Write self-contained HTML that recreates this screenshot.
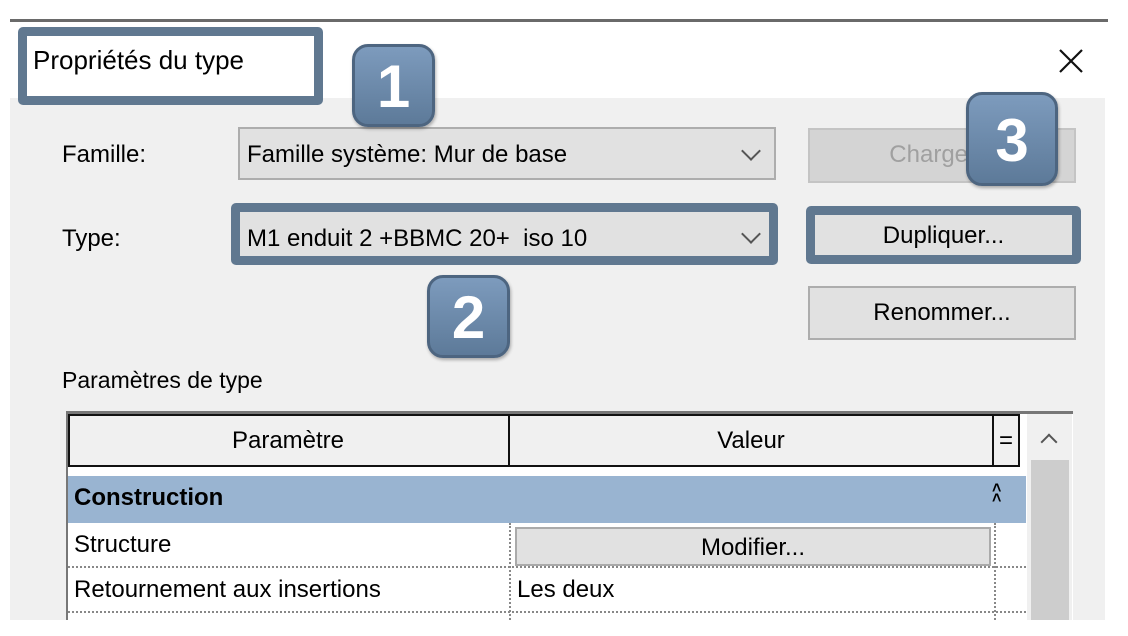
<!DOCTYPE html>
<html><head><meta charset="utf-8"><style>
body{margin:0;width:1128px;height:636px;background:#fff;position:relative;overflow:hidden;font-family:"Liberation Sans",sans-serif;color:#000}
.a{position:absolute;box-sizing:border-box}
.t{font-size:24px;white-space:nowrap}
.combo{background:#e1e1e1;border:2px solid #adadad}
.btn{background:#e1e1e1;border:2px solid #adadad;text-align:center;line-height:50px}
.hl{border:9px solid #607890;border-radius:5px}
.badge{background:linear-gradient(#7d9bbd,#5d7a99);border:3px solid #4d6580;border-radius:16px;color:#fff;font-weight:bold;font-size:60px;text-align:center;box-shadow:1px 2px 3px rgba(0,0,0,.3)}
.chev{position:absolute;width:12px;height:12px;border-right:2px solid #555;border-bottom:2px solid #555;transform:rotate(45deg)}
.dot{border-bottom:2px dotted #888}
</style></head><body>
<div class="a" style="left:10px;top:19px;width:1098px;height:3px;background:#6a6a6a"></div>
<div class="a" style="left:10px;top:98px;width:1095px;height:522px;background:#f0f0f0"></div>
<div class="a hl" style="left:18px;top:27px;width:305px;height:78px;background:#fff"></div>
<div class="a t" style="left:33px;top:45px;font-size:26px">Propriétés du type</div>
<svg class="a" style="left:1058px;top:48px" width="26" height="26"><path d="M2 2L24 24M24 2L2 24" stroke="#111" stroke-width="2.2"/></svg>

<div class="a t" style="left:62px;top:141px">Famille:</div>
<div class="a combo" style="left:238px;top:127px;width:538px;height:53px"></div>
<div class="a t" style="left:247px;top:141px">Famille système: Mur de base</div>
<div class="chev" style="left:744px;top:144px"></div>

<div class="a t" style="left:62px;top:225px">Type:</div>
<div class="a hl" style="left:231px;top:203px;width:547px;height:62px;background:#e1e1e1"></div>
<div class="a t" style="left:247px;top:225px">M1 enduit 2 +BBMC 20+&nbsp; iso 10</div>
<div class="chev" style="left:744px;top:227px"></div>

<div class="a btn t" style="left:808px;top:128px;width:268px;height:55px;color:#a0a0a0;background:#d4d4d4;border-color:#c4c4c4">Charger...</div>
<div class="a hl" style="left:806px;top:206px;width:275px;height:58px;background:#e1e1e1"></div>
<div class="a t" style="left:806px;top:222px;width:275px;text-align:center">Dupliquer...</div>
<div class="a btn t" style="left:808px;top:286px;width:268px;height:54px">Renommer...</div>

<div class="a t" style="left:62px;top:367px;font-size:23px">Paramètres de type</div>

<div class="a" style="left:0;top:0;width:1128px;height:620px;overflow:hidden">
<div class="a" style="left:66px;top:411px;width:1007px;height:220px;background:#fff;border-top:3px solid #777;border-left:2px solid #777"></div>
<div class="a" style="left:68px;top:414px;width:952px;height:53px;background:#f0f0f0;border:2px solid #111"></div>
<div class="a" style="left:508px;top:414px;width:2px;height:53px;background:#111"></div>
<div class="a" style="left:992px;top:414px;width:2px;height:53px;background:#111"></div>
<div class="a t" style="left:68px;top:427px;width:440px;text-align:center">Paramètre</div>
<div class="a t" style="left:510px;top:427px;width:482px;text-align:center">Valeur</div>
<div class="a t" style="left:999px;top:427px">=</div>
<div class="a" style="left:1027px;top:414px;width:45px;height:220px;background:#f0f0f0"></div>
<div class="a" style="left:1031px;top:460px;width:38px;height:176px;background:#cdcdcd"></div>
<div class="chev" style="left:1043px;top:436px;transform:rotate(225deg);width:10px;height:10px"></div>

<div class="a" style="left:68px;top:476px;width:958px;height:47px;background:#99b4d1"></div>
<div class="a t" style="left:74px;top:484px;font-weight:bold">Construction</div>
<div class="a" style="left:992px;top:484px;font-size:16px;font-weight:bold;line-height:10px">˄<br>˄</div>

<div class="a dot" style="left:68px;top:523px;width:958px;height:45px"></div>
<div class="a dot" style="left:68px;top:568px;width:958px;height:45px"></div>
<div class="a" style="left:509px;top:523px;height:113px;border-left:2px dotted #888"></div>
<div class="a" style="left:994px;top:523px;height:113px;border-left:2px dotted #888"></div>
<div class="a t" style="left:74px;top:531px">Structure</div>
<div class="a btn t" style="left:515px;top:527px;width:476px;height:39px;line-height:38px;border-color:#aaa">Modifier...</div>
<div class="a t" style="left:74px;top:576px">Retournement aux insertions</div>
<div class="a t" style="left:517px;top:576px">Les deux</div>
</div>

<div class="a badge" style="left:352px;top:44px;width:83px;height:83px;line-height:80px">1</div>
<div class="a badge" style="left:427px;top:275px;width:83px;height:83px;line-height:80px">2</div>
<div class="a badge" style="left:966px;top:92px;width:92px;height:94px;line-height:92px">3</div>
</body></html>
